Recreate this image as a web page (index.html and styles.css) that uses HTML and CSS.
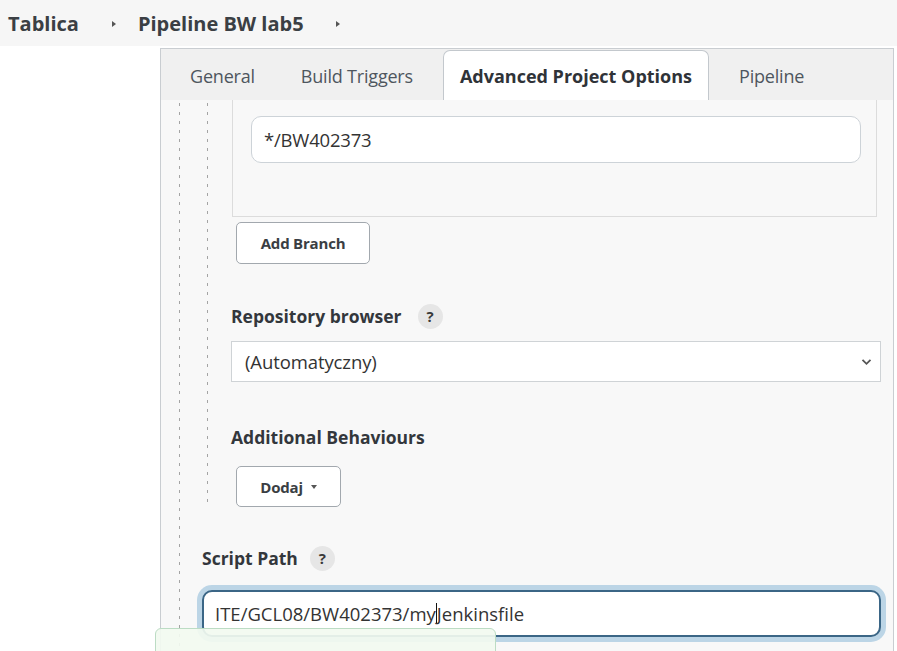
FILE: index.html
```html
<!DOCTYPE html>
<html lang="pl">
<head>
<meta charset="utf-8">
<title>Pipeline BW lab5</title>
<link rel="stylesheet" href="styles.css">
</head>
<body>
<nav class="crumbs">
  <span class="crumb">Tablica</span>
  <span class="sep sep-first"></span>
  <span class="crumb">Pipeline BW lab5</span>
  <span class="sep sep-last"></span>
</nav>
<main class="page">
  <section class="panel">
    <div class="tabs">
      <div class="tab">General</div>
      <div class="tab">Build Triggers</div>
      <div class="tab active">Advanced Project Options</div>
      <div class="tab">Pipeline</div>
    </div>
    <div class="content">
      <div class="lvl1">
        <div class="lvl2">
          <div class="branch-box">
            <div class="text-input">*/BW402373</div>
          </div>
          <button class="btn btn-add">Add Branch</button>
          <div class="label label-repo">Repository browser<span class="help help-repo">?</span></div>
          <div class="select">
            <span>(Automatyczny)</span>
            <svg class="chev" width="11" height="8" viewBox="0 0 11 8"><path d="M1.5 1.8 L5.5 5.8 L9.5 1.8" fill="none" stroke="#555" stroke-width="1.8"/></svg>
          </div>
          <div class="label label-add">Additional Behaviours</div>
          <button class="btn btn-dodaj">Dodaj<span class="caret"></span></button>
        </div>
        <div class="script">
          <div class="label label-script">Script Path<span class="help help-script">?</span></div>
          <div class="text-input focused">ITE/GCL08/BW402373/my<span class="cursor"></span>Jenkinsfile</div>
        </div>
      </div>
    </div>
  </section>
  <div class="toast"></div>
</main>
</body>
</html>
```
FILE: styles.css
```css
html, body {
  margin: 0;
  padding: 0;
  background: #ffffff;
  font-family: "Open Sans", "Noto Sans", sans-serif;
  color: #333333;
  overflow: hidden;
}
.crumbs {
  height: 46px;
  background: #f6f6f6;
  display: flex;
  align-items: center;
  padding-left: 8px;
  box-sizing: border-box;
}
.crumb {
  font-weight: 700;
  font-size: 20px;
  color: #3b3f44;
  letter-spacing: 0;
}
.sep {
  width: 0;
  height: 0;
  border-left: 4px solid #555;
  border-top: 3.5px solid transparent;
  border-bottom: 3.5px solid transparent;
}
.sep-first { margin: 1px 22px 0 33px; }
.sep-last { margin: 1px 0 0 32px; }
.page {
  position: relative;
  padding-top: 2px;
  height: 603px;
}
.panel {
  margin-left: 160px;
  width: 734px;
  box-sizing: border-box;
  border: 1px solid #c9cdd1;
  border-bottom: none;
  height: 620px;
  background: #f8f8f8;
}
.tabs {
  display: flex;
  gap: 14px;
  height: 51px;
  box-sizing: border-box;
  padding: 1px 0 0 13px;
  background: #f0f0f0;
}
.tab {
  padding: 0 15px;
  display: flex;
  align-items: center;
  font-size: 18px;
  letter-spacing: -0.2px;
  color: #4e565e;
  border: 1px solid transparent;
  border-bottom: none;
  border-radius: 7px 7px 0 0;
}
.tab.active {
  background: #ffffff;
  border-color: #c3c8cd;
  font-weight: 700;
  letter-spacing: 0;
  padding: 0 16px;
  color: #2f3338;
}
.content {
  padding-left: 18px;
  padding-right: 12px;
}
.lvl1 {
  background-image: linear-gradient(#a4a4a4 34%, transparent 34%);
  background-size: 1px 9px;
  background-repeat: repeat-y;
  background-position: 0 3px;
  height: 560px;
}
.lvl2 {
  margin-left: 28px;
  padding-left: 24px;
  background-image: linear-gradient(#a4a4a4 34%, transparent 34%);
  background-size: 1px 9px;
  background-repeat: repeat-y;
  background-position: 0 3px;
  display: flex;
  flex-direction: column;
  align-items: flex-start;
}
.branch-box {
  align-self: stretch;
  margin: 0 4px 0 1px;
  border: 1px solid #dcdcdc;
  border-top: none;
  padding: 16px 15px 53px 18px;
}
.text-input {
  height: 47px;
  box-sizing: border-box;
  background: #ffffff;
  border: 1px solid #cdd3d8;
  border-radius: 10px;
  display: flex;
  align-items: center;
  padding-left: 12px;
  font-size: 18.5px;
  letter-spacing: -0.2px;
  color: #333;
}
.btn {
  font-family: inherit;
  font-weight: 700;
  font-size: 15px;
  letter-spacing: -0.2px;
  color: #3a3e43;
  background: #ffffff;
  border: 1px solid #a2a8ae;
  border-radius: 5px;
  height: 42px;
  margin-left: 5px;
  padding: 0;
  display: flex;
  align-items: center;
  justify-content: center;
}
.btn-add {
  margin-top: 5px;
  width: 134px;
}
.label {
  font-weight: 700;
  font-size: 17.5px;
  letter-spacing: 0;
  color: #33373c;
  line-height: 24px;
  height: 24px;
  display: flex;
  align-items: center;
}
.label-repo { margin-top: 40px; }
.label-add { margin-top: 43px; }
.help {
  width: 25px;
  height: 25px;
  border-radius: 50%;
  background: #e6e6e6;
  display: inline-flex;
  align-items: center;
  justify-content: center;
  font-size: 15px;
  font-weight: 700;
  color: #3a3a3a;
}
.help-repo { margin-left: 16px; }
.help-script { margin-left: 12px; }
.select {
  margin-top: 13px;
  align-self: stretch;
  height: 41px;
  box-sizing: border-box;
  background: #fff;
  border: 1px solid #cfd3d6;
  display: flex;
  align-items: center;
  justify-content: space-between;
  padding: 0 8px 0 13px;
  font-size: 18.5px;
  letter-spacing: -0.1px;
  color: #333;
}
.btn-dodaj {
  margin-top: 17px;
  width: 105px;
  height: 41px;
}
.caret {
  width: 0;
  height: 0;
  border-top: 4px solid #555;
  border-left: 3.5px solid transparent;
  border-right: 3.5px solid transparent;
  margin-left: 8px;
}
.script {
  padding-left: 23px;
}
.label-script {
  margin-top: 39px;
}
.text-input.focused {
  margin-top: 20px;
  border: 2px solid #3b6686;
  box-shadow: 0 0 0 5px #bcd5e6;
  padding-left: 11px;
  letter-spacing: 0;
}
.cursor {
  display: inline-block;
  width: 1px;
  height: 21px;
  background: #111;
}
.toast {
  position: absolute;
  left: 155px;
  top: 582px;
  width: 341px;
  height: 40px;
  box-sizing: border-box;
  border: 1px solid #bcdcc4;
  border-radius: 6px 6px 0 0;
  background: rgba(242, 250, 240, 0.92);
}
```
